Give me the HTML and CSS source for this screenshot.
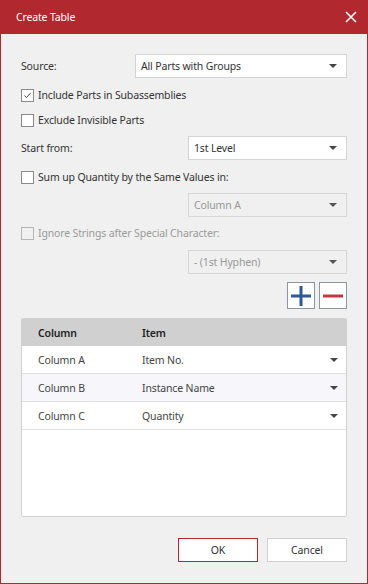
FILE: index.html
```html
<!DOCTYPE html>
<html>
<head>
<meta charset="utf-8">
<link rel="stylesheet" href="styles.css">
</head>
<body>
<div class="window">
  <div class="titlebar">
    <span class="title">Create Table</span>
    <svg class="close" width="12" height="12" viewBox="0 0 12 12"><path d="M1 1L11 11M11 1L1 11" stroke="#fff" stroke-width="1.6" fill="none"/></svg>
  </div>
  <div class="content">
    <div class="row r-source">
      <span class="label">Source:</span>
      <div class="select wide"><span>All Parts with Groups</span><i class="arrow"></i></div>
    </div>
    <label class="check r-c1"><span class="box checked"><svg width="11" height="11" viewBox="0 0 11 11"><path d="M2.5 5.5L4.5 7.5L8.5 3" stroke="#333" stroke-width="0.9" fill="none"/></svg></span>Include Parts in Subassemblies</label>
    <label class="check r-c2"><span class="box"></span>Exclude Invisible Parts</label>
    <div class="row r-start">
      <span class="label">Start from:</span>
      <div class="select narrow"><span>1st Level</span><i class="arrow"></i></div>
    </div>
    <label class="check r-c3"><span class="box"></span>Sum up Quantity by the Same Values in:</label>
    <div class="row r-cola">
      <div class="select narrow disabled"><span>Column A</span><i class="arrow"></i></div>
    </div>
    <label class="check r-c4 disabled"><span class="box"></span>Ignore Strings after Special Character:</label>
    <div class="row r-hyph">
      <div class="select narrow disabled"><span>- (1st Hyphen)</span><i class="arrow"></i></div>
    </div>
    <div class="row r-tools">
      <div class="tool"><svg width="22" height="22" viewBox="0 0 22 22"><path d="M11 1V21M1 11H21" stroke="#2d5796" stroke-width="3" fill="none"/></svg></div>
      <div class="tool"><svg width="22" height="22" viewBox="0 0 22 22"><path d="M1 11H21" stroke="#c4373c" stroke-width="3" fill="none"/></svg></div>
    </div>
    <div class="table">
      <div class="thead"><span class="c1">Column</span><span class="c2">Item</span></div>
      <div class="trow"><span class="c1">Column A</span><span class="c2">Item No.</span><i class="arrow"></i></div>
      <div class="trow alt"><span class="c1">Column B</span><span class="c2">Instance Name</span><i class="arrow"></i></div>
      <div class="trow"><span class="c1">Column C</span><span class="c2">Quantity</span><i class="arrow"></i></div>
    </div>
    <div class="row r-buttons">
      <button class="btn ok">OK</button>
      <button class="btn">Cancel</button>
    </div>
  </div>
</div>
</body>
</html>
```
FILE: styles.css
```css
html, body { margin: 0; padding: 0; }
body {
  font-family: "Noto Sans", "Open Sans", sans-serif;
  font-size: 10.5px;
  letter-spacing: -0.15px;
  color: #333;
  background: #f0f0f0;
}
.window {
  width: 368px;
  height: 584px;
  box-sizing: border-box;
  border: 1px solid #b1282f;
  border-top: none;
  background: #f0f0f0;
  display: flex;
  flex-direction: column;
}
.titlebar {
  height: 34px;
  margin: 0 -1px;
  background: #b1282f;
  display: flex;
  align-items: center;
  justify-content: space-between;
  padding: 0 11px 0 16px;
  color: #fff;
  font-size: 10.5px;
}
.close { display: block; }
.content {
  padding: 20px 20px 0 20px;
  display: flex;
  flex-direction: column;
}
.row { display: flex; align-items: center; }
.label { flex: 1; }
.select {
  height: 24px;
  box-sizing: border-box;
  border: 1px solid #d4d4d4;
  background: #fff;
  display: flex;
  align-items: center;
  padding: 0 9px 0 5px;
  margin-left: auto;
}
.select span { flex: 1; }
.select.wide { width: 212px; }
.select.narrow { width: 159px; }
.select.disabled { background: #f0f0f0; color: #999; border-color: #d6d6d6; }
.arrow {
  display: block;
  width: 0; height: 0;
  border-left: 4px solid transparent;
  border-right: 4px solid transparent;
  border-top: 4px solid #444;
}
.select.disabled .arrow { border-top-color: #555; }
.check {
  display: flex;
  align-items: center;
  height: 20px;
}
.box {
  width: 11px; height: 11px;
  border: 1px solid #8a8a8a;
  background: #fff;
  margin-right: 4px;
  display: flex;
}
.check.disabled { color: #9a9a9a; }
.check.disabled .box { border-color: #b5b5b5; background: #f0f0f0; }
.r-c1 { margin-top: 7px; }
.r-c2 { margin-top: 5px; }
.r-start { margin-top: 6px; }
.r-c3 { margin-top: 7px; }
.r-cola { margin-top: 6px; }
.r-c4 { margin-top: 6px; }
.r-hyph { margin-top: 7px; }
.r-tools { margin-top: 8px; justify-content: flex-end; gap: 4px; }
.tool {
  width: 28px; height: 27px;
  box-sizing: border-box;
  border: 1px solid #8f96a3;
  background: #fff;
  display: flex;
  align-items: center;
  justify-content: center;
}
.table {
  margin-top: 9px;
  height: 199px;
  box-sizing: border-box;
  border: 1px solid #d0d0d0;
  border-radius: 2px;
  background: #fff;
}
.thead {
  height: 27px;
  background: #d0d0d0;
  display: flex;
  align-items: center;
  font-weight: 600;
  color: #222;
}
.trow {
  height: 28px;
  box-sizing: border-box;
  border-bottom: 1px solid #e0e0e4;
  display: flex;
  align-items: center;
  padding-right: 8px;
  color: #444;
}
.trow.alt { background: #f7f7fb; }
.c1 { width: 104px; padding-left: 16px; }
.c2 { flex: 1; }
.r-buttons { margin-top: 21px; justify-content: flex-end; gap: 9px; }
.btn {
  width: 80px; height: 24px;
  box-sizing: border-box;
  border: 1px solid #d0d0d0;
  background: #fff;
  font-family: inherit;
  font-size: 10.5px;
  letter-spacing: -0.15px;
  color: #333;
  padding: 0;
}
.btn.ok { border-color: #b1282f; }
```
